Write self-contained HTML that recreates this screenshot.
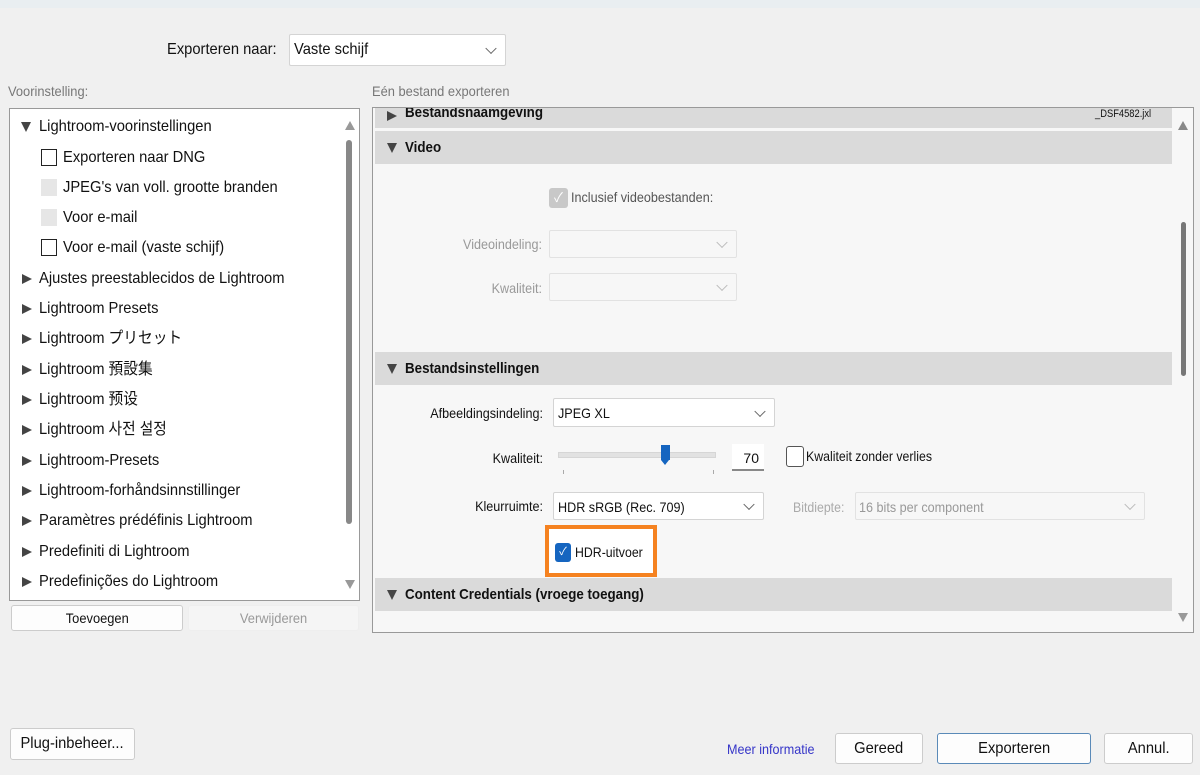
<!DOCTYPE html>
<html><head><meta charset="utf-8"><style>
*{box-sizing:border-box;margin:0;padding:0}
body{width:1200px;height:775px;background:#f0f0f0;position:relative;overflow:hidden;font-family:"Liberation Sans","Noto Sans CJK JP",sans-serif;color:#111;font-size:16px}
.a{position:absolute;white-space:nowrap;line-height:20px}
.n{transform:scaleX(.92);transform-origin:left center}
.dd{position:absolute;background:#fff;border:1px solid #d4d4d4;border-radius:2px}
.dd .c{position:absolute;right:10px;top:50%;width:8px;height:8px;border-right:1.3px solid #666;border-bottom:1.3px solid #666;transform:translateY(-70%) rotate(45deg)}
.dis{background:#f7f7f7;border-color:#e2e2e2}
.dis .c{border-color:#bbb}
.hdr{position:absolute;left:375px;width:797px;background:#dadada;font-weight:bold;font-size:15px}
.hdr .t{position:absolute;left:30px;white-space:nowrap;transform:scaleX(.89);transform-origin:left center}
.tri{position:absolute;left:12px;width:0;height:0;border-left:5px solid transparent;border-right:5px solid transparent;border-top:10px solid #444}
.rt{width:0;height:0;border-top:5px solid transparent;border-bottom:5px solid transparent;border-left:10px solid #444;position:absolute}
.btn{position:absolute;background:#fdfdfd;border:1px solid #ccc;border-radius:3px;text-align:center;font-size:16px}
.btn span{display:inline-block;transform:scaleX(.92)}
.cb{position:absolute;width:16px;height:17px;border:1.5px solid #222;background:#fff}
.cbd{position:absolute;width:16px;height:17px;background:#e6e6e6;border:1px solid #e6e6e6}
.lbl{position:absolute;font-size:14px;text-align:right;white-space:nowrap;line-height:18px;transform:scaleX(.9);transform-origin:right center}
</style></head><body>
<div class="a" style="left:0;top:0;width:1200px;height:8px;background:#e9eef1"></div>
<div class="a n" style="left:167px;top:40px;font-size:16px">Exporteren naar:</div>
<div class="dd" style="left:289px;top:34px;width:217px;height:32px"><span class="a n" style="left:4px;top:5px">Vaste schijf</span><span class="c"></span></div>
<div class="a n" style="left:8px;top:81px;font-size:14px;color:#777">Voorinstelling:</div>
<div class="a n" style="left:372px;top:81px;font-size:14px;color:#777">Eén bestand exporteren</div>

<div class="a" style="left:9px;top:108px;width:351px;height:493px;background:#fff;border:1px solid #999"></div>
<div class="a" style="left:345px;top:121px;width:0;height:0;border-left:5px solid transparent;border-right:5px solid transparent;border-bottom:9px solid #999"></div>
<div class="a" style="left:346px;top:140px;width:6px;height:384px;background:#888;border-radius:3px"></div>
<div class="a" style="left:345px;top:580px;width:0;height:0;border-left:5px solid transparent;border-right:5px solid transparent;border-top:9px solid #999"></div>
<div class="tri" style="left:21px;top:122px"></div>
<div class="a n" style="left:39px;top:117px">Lightroom-voorinstellingen</div>
<div class="cb" style="left:41px;top:149px"></div><div class="a n" style="left:63px;top:148px">Exporteren naar DNG</div>
<div class="cbd" style="left:41px;top:179px"></div><div class="a n" style="left:63px;top:178px">JPEG's van voll. grootte branden</div>
<div class="cbd" style="left:41px;top:209px"></div><div class="a n" style="left:63px;top:208px">Voor e-mail</div>
<div class="cb" style="left:41px;top:239px"></div><div class="a n" style="left:63px;top:238px">Voor e-mail (vaste schijf)</div>
<div class="rt" style="left:22px;top:274px"></div><div class="a n" style="left:39px;top:269px">Ajustes preestablecidos de Lightroom</div>
<div class="rt" style="left:22px;top:304px"></div><div class="a n" style="left:39px;top:299px">Lightroom Presets</div>
<div class="rt" style="left:22px;top:334px"></div><div class="a n" style="left:39px;top:329px">Lightroom プリセット</div>
<div class="rt" style="left:22px;top:365px"></div><div class="a n" style="left:39px;top:360px">Lightroom 預設集</div>
<div class="rt" style="left:22px;top:395px"></div><div class="a n" style="left:39px;top:390px">Lightroom 预设</div>
<div class="rt" style="left:22px;top:425px"></div><div class="a n" style="left:39px;top:420px">Lightroom 사전 설정</div>
<div class="rt" style="left:22px;top:456px"></div><div class="a n" style="left:39px;top:451px">Lightroom-Presets</div>
<div class="rt" style="left:22px;top:486px"></div><div class="a n" style="left:39px;top:481px">Lightroom-forhåndsinnstillinger</div>
<div class="rt" style="left:22px;top:516px"></div><div class="a n" style="left:39px;top:511px">Paramètres prédéfinis Lightroom</div>
<div class="rt" style="left:22px;top:547px"></div><div class="a n" style="left:39px;top:542px">Predefiniti di Lightroom</div>
<div class="rt" style="left:22px;top:577px"></div><div class="a n" style="left:39px;top:572px">Predefinições do Lightroom</div>
<div class="btn" style="left:11px;top:605px;width:172px;height:26px;font-size:14px;line-height:24px"><span>Toevoegen</span></div>
<div class="btn" style="left:188px;top:605px;width:171px;height:26px;font-size:14px;line-height:24px;color:#999;background:#f5f5f5;border-color:#eee"><span>Verwijderen</span></div>

<div class="a" style="left:372px;top:107px;width:822px;height:526px;background:#f7f7f7;border:1px solid #999;overflow:hidden"></div>
<div class="hdr" style="top:108px;height:20px;overflow:hidden"><span class="t" style="top:-5px;line-height:20px">Bestandsnaamgeving</span><div class="rt" style="left:12px;top:3px"></div><span class="a" style="left:720px;top:-4px;font-size:11px;font-weight:normal;transform:scaleX(.85);transform-origin:left">_DSF4582.jxl</span></div>
<div class="hdr" style="top:131px;height:33px;line-height:33px"><span class="t">Video</span><div class="tri" style="top:12px"></div></div>
<div class="a" style="left:549px;top:188px;width:19px;height:20px;background:#c8c8c8;border-radius:3px;color:#fff;font-size:13px;text-align:center;line-height:20px">✓</div>
<div class="a" style="left:571px;top:187px;font-size:14px;color:#555;transform:scaleX(.9);transform-origin:left">Inclusief videobestanden:</div>
<div class="lbl" style="left:400px;width:142px;top:235px;color:#999">Videoindeling:</div>
<div class="dd dis" style="left:549px;top:230px;width:188px;height:28px"><span class="c"></span></div>
<div class="lbl" style="left:400px;width:142px;top:279px;color:#999">Kwaliteit:</div>
<div class="dd dis" style="left:549px;top:273px;width:188px;height:28px"><span class="c"></span></div>
<div class="hdr" style="top:352px;height:33px;line-height:33px"><span class="t">Bestandsinstellingen</span><div class="tri" style="top:12px"></div></div>
<div class="lbl" style="left:400px;width:143px;top:404px">Afbeeldingsindeling:</div>
<div class="dd" style="left:553px;top:398px;width:222px;height:29px"><span class="a" style="left:4px;top:4px;font-size:14px;transform:scaleX(.9);transform-origin:left">JPEG XL</span><span class="c"></span></div>
<div class="lbl" style="left:400px;width:143px;top:449px">Kwaliteit:</div>
<div class="a" style="left:558px;top:452px;width:158px;height:6px;background:#e2e2e2;border:1px solid #d6d6d6"></div>
<div class="a" style="left:661px;top:445px;width:9px;height:15px;background:#1565c0"></div>
<div class="a" style="left:661px;top:460px;width:0;height:0;border-left:4.5px solid transparent;border-right:4.5px solid transparent;border-top:5px solid #1565c0"></div>
<div class="a" style="left:563px;top:470px;width:1px;height:4px;background:#aaa"></div>
<div class="a" style="left:713px;top:470px;width:1px;height:4px;background:#aaa"></div>
<div class="a" style="left:732px;top:444px;width:32px;height:27px;background:#fff;border-bottom:2px solid #888;font-size:14px;text-align:right;padding:4px 5px 0 0">70</div>
<div class="a" style="left:786px;top:446px;width:18px;height:21px;border:1.3px solid #555;border-radius:3px;background:#fff"></div>
<div class="a" style="left:806px;top:446px;font-size:14px;transform:scaleX(.88);transform-origin:left">Kwaliteit zonder verlies</div>
<div class="lbl" style="left:400px;width:143px;top:497px">Kleurruimte:</div>
<div class="dd" style="left:553px;top:492px;width:211px;height:28px"><span class="a" style="left:4px;top:4px;font-size:14px;transform:scaleX(.9);transform-origin:left">HDR sRGB (Rec. 709)</span><span class="c"></span></div>
<div class="a" style="left:793px;top:497px;font-size:14px;color:#aaa;transform:scaleX(.88);transform-origin:left">Bitdiepte:</div>
<div class="dd dis" style="left:855px;top:492px;width:290px;height:28px"><span class="a" style="left:3px;top:4px;font-size:14px;color:#999;transform:scaleX(.9);transform-origin:left">16 bits per component</span><span class="c"></span></div>
<div class="a" style="left:545px;top:525px;width:112px;height:52px;border:4px solid #f58220;background:#fff"></div>
<div class="a" style="left:555px;top:543px;width:16px;height:19px;background:#1565c0;border-radius:3px;color:#fff;font-size:11px;text-align:center;line-height:19px">✓</div>
<div class="a" style="left:575px;top:542px;font-size:14px;transform:scaleX(.88);transform-origin:left">HDR-uitvoer</div>
<div class="hdr" style="top:578px;height:33px;line-height:33px"><span class="t">Content Credentials (vroege toegang)</span><div class="tri" style="top:12px"></div></div>
<div class="a" style="left:1178px;top:121px;width:0;height:0;border-left:5px solid transparent;border-right:5px solid transparent;border-bottom:9px solid #888"></div>
<div class="a" style="left:1181px;top:222px;width:5px;height:154px;background:#777;border-radius:3px"></div>
<div class="a" style="left:1178px;top:613px;width:0;height:0;border-left:5px solid transparent;border-right:5px solid transparent;border-top:9px solid #999"></div>

<div class="btn" style="left:10px;top:728px;width:125px;height:32px;line-height:30px"><span>Plug-inbeheer...</span></div>
<div class="a" style="left:727px;top:739px;font-size:14px;color:#3535c8;transform:scaleX(.9);transform-origin:left">Meer informatie</div>
<div class="btn" style="left:835px;top:733px;width:88px;height:31px;line-height:29px"><span>Gereed</span></div>
<div class="btn" style="left:937px;top:733px;width:154px;height:31px;line-height:29px;border:1.5px solid #5a8ab8"><span>Exporteren</span></div>
<div class="btn" style="left:1104px;top:733px;width:89px;height:31px;line-height:29px"><span>Annul.</span></div>
</body></html>
